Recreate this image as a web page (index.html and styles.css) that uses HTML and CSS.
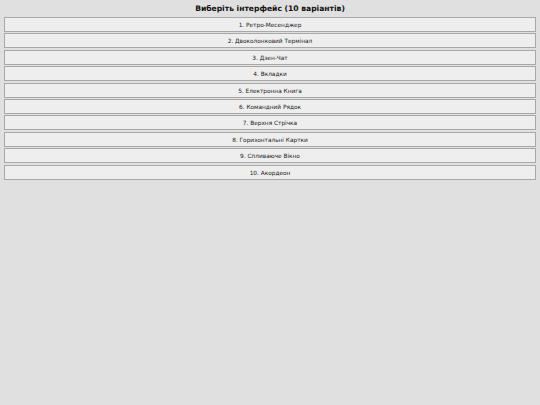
FILE: index.html
```html
<!DOCTYPE html>
<html lang="uk">
<head>
<meta charset="utf-8">
<title>Виберіть інтерфейс</title>
<link rel="stylesheet" href="styles.css">
</head>
<body>
<h1 class="title">Виберіть інтерфейс (10 варіантів)</h1>
<div class="menu">
  <button class="item">1. Ретро-Месенджер</button>
  <button class="item">2. Двоколонковий Термінал</button>
  <button class="item">3. Дзен-Чат</button>
  <button class="item">4. Вкладки</button>
  <button class="item">5. Електронна Книга</button>
  <button class="item">6. Командний Рядок</button>
  <button class="item">7. Верхня Стрічка</button>
  <button class="item">8. Горизонтальні Картки</button>
  <button class="item">9. Спливаюче Вікно</button>
  <button class="item">10. Акордеон</button>
</div>
</body>
</html>
```

FILE: styles.css
```css
html, body {
  margin: 0;
  padding: 0;
  background: #e0e0e0;
  font-family: "DejaVu Sans", Verdana, sans-serif;
  color: #111;
}
body {
  padding: 0 4px;
}
.title {
  margin: 0;
  height: 17px;
  line-height: 18px;
  font-size: 7.6px;
  font-weight: bold;
  text-align: center;
}
.menu {
  display: flex;
  flex-direction: column;
  gap: 1.4px;
}
.item {
  display: block;
  width: 100%;
  height: 15px;
  margin: 0;
  padding: 1px 0 0;
  box-sizing: border-box;
  background: #eeeeee;
  border: 1px solid #a8a8a8;
  border-radius: 0;
  font-family: "DejaVu Sans", Verdana, sans-serif;
  font-size: 5.8px;
  color: #1a1a1a;
  text-align: center;
  line-height: 13px;
}
```
